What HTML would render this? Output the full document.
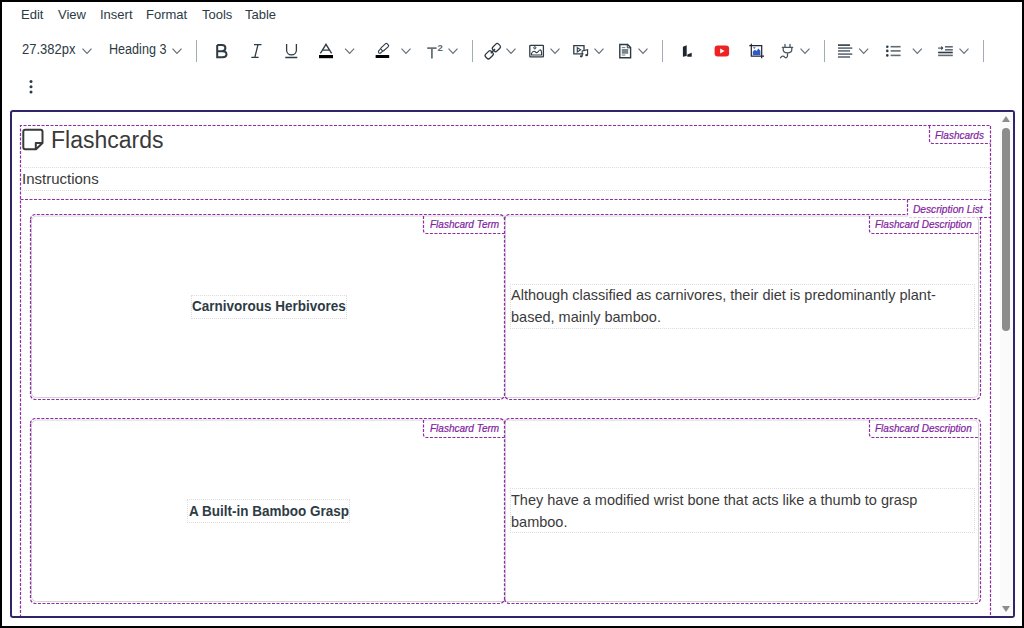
<!DOCTYPE html>
<html><head><meta charset="utf-8">
<style>
html,body{margin:0;padding:0;width:1024px;height:628px;overflow:hidden;background:#fff;}
body{position:relative;font-family:"Liberation Sans",sans-serif;color:#2d3b45;}
.a{position:absolute;white-space:nowrap;line-height:1;}
#frame{position:absolute;left:0;top:0;width:1024px;height:628px;box-sizing:border-box;border:2px solid #000;z-index:50;pointer-events:none;}
.menu{font-size:13px;top:8px;color:#2d3b45;}
.sep{position:absolute;top:40px;width:1px;height:22px;background:#c2c8cc;}
.chev{position:absolute;top:48px;width:10px;height:6px;}
#editor{position:absolute;left:10px;top:110px;width:1005px;height:508px;box-sizing:border-box;border:2px solid #30256a;border-radius:3px;overflow:hidden;background:#fff;}
.ct{color:#3a3a3a;}
.dot{position:absolute;border:1px dotted #dcdcdc;box-sizing:border-box;}
.lbl{position:absolute;font-style:italic;font-size:10px;line-height:1;color:#7f22a0;-webkit-text-stroke:0.2px #7f22a0;white-space:nowrap;}
.col{position:absolute;box-sizing:border-box;border-radius:6px;}
.colin{position:absolute;left:1px;top:1px;right:1px;bottom:1px;border:1px solid #e3e3e3;border-radius:5px;}
</style></head><body>
<div id="frame"></div>

<!-- menu -->
<div class="a menu" style="left:21px">Edit</div>
<div class="a menu" style="left:58px">View</div>
<div class="a menu" style="left:100px">Insert</div>
<div class="a menu" style="left:146px">Format</div>
<div class="a menu" style="left:202px">Tools</div>
<div class="a menu" style="left:245px">Table</div>

<!-- toolbar -->
<div class="a" style="left:22px;top:42px;font-size:13px;transform:scaleY(1.06);transform-origin:0 0">27.382px</div>
<div class="a" style="left:109px;top:43px;font-size:12.6px;transform:scaleY(1.1);transform-origin:0 0">Heading 3</div>
<svg style="position:absolute;left:0;top:0" width="1024" height="100" viewBox="0 0 1024 100">
<polyline points="82.5,48.6 87.0,53.3 91.5,48.6" fill="none" stroke="#66717a" stroke-width="1.2"/><polyline points="172.5,48.6 177.0,53.3 181.5,48.6" fill="none" stroke="#66717a" stroke-width="1.2"/><polyline points="345.1,48.6 349.6,53.3 354.1,48.6" fill="none" stroke="#66717a" stroke-width="1.2"/><polyline points="401.5,48.6 406.0,53.3 410.5,48.6" fill="none" stroke="#66717a" stroke-width="1.2"/><polyline points="448.5,48.6 453.0,53.3 457.5,48.6" fill="none" stroke="#66717a" stroke-width="1.2"/><polyline points="506.5,48.6 511.0,53.3 515.5,48.6" fill="none" stroke="#66717a" stroke-width="1.2"/><polyline points="550.5,48.6 555.0,53.3 559.5,48.6" fill="none" stroke="#66717a" stroke-width="1.2"/><polyline points="594.5,48.6 599.0,53.3 603.5,48.6" fill="none" stroke="#66717a" stroke-width="1.2"/><polyline points="638.5,48.6 643.0,53.3 647.5,48.6" fill="none" stroke="#66717a" stroke-width="1.2"/><polyline points="800.5,48.6 805.0,53.3 809.5,48.6" fill="none" stroke="#66717a" stroke-width="1.2"/><polyline points="859.2,48.6 863.7,53.3 868.2,48.6" fill="none" stroke="#66717a" stroke-width="1.2"/><polyline points="912.8,48.6 917.3,53.3 921.8,48.6" fill="none" stroke="#66717a" stroke-width="1.2"/><polyline points="959.5,48.6 964.0,53.3 968.5,48.6" fill="none" stroke="#66717a" stroke-width="1.2"/>
<rect x="196" y="40" width="1" height="22" fill="#a4acb3"/><rect x="472" y="40" width="1" height="22" fill="#a4acb3"/><rect x="662" y="40" width="1" height="22" fill="#a4acb3"/><rect x="824" y="40" width="1" height="22" fill="#a4acb3"/><rect x="983" y="40" width="1" height="22" fill="#a4acb3"/>
<!-- B -->
<path fill="none" stroke="#2d3b45" stroke-width="2" stroke-linejoin="miter" d="M217.2,45.1 H222 C224.4,45.1 225.4,46.5 225.4,48.1 C225.4,49.8 224.2,51.2 222,51.2 H217.2 M217.2,51.2 H222.6 C225.3,51.2 226.5,52.7 226.5,54.5 C226.5,56.3 225.2,57.2 222.6,57.2 H217.2 V45.1"/>
<!-- I -->
<path fill="none" stroke="#2d3b45" stroke-width="1.3" d="M254,44.7 H261.5 M251.3,57.4 H258.6 M258,44.7 L254.8,57.4"/>
<!-- U -->
<path fill="none" stroke="#2d3b45" stroke-width="1.3" d="M286.6,44 V50.3 a4.9,4.6 0 0 0 9.8,0 V44 M285.3,57.5 H297.3"/>
<!-- A -->
<path fill="none" stroke="#2d3b45" stroke-width="1.3" d="M320.4,53.4 L326,44.3 L331.6,53.4 M322.4,50.2 H329.6"/>
<rect x="319" y="55" width="14" height="3.2" fill="#000"/>
<!-- highlighter -->
<rect x="375.6" y="54.9" width="13.6" height="3.2" rx="0.5" fill="#000"/>
<g transform="translate(384,47.8) rotate(-42)" fill="none" stroke="#2d3b45" stroke-width="1.1" stroke-linejoin="round">
<rect x="-3.2" y="-2" width="8.2" height="4" rx="1"/>
<path d="M-3.2,-1.6 L-6.6,-1.1 L-7.4,0.6 L-6.4,1.6 L-3.2,1.6"/>
</g>
<!-- T2 -->
<path fill="none" stroke="#66717a" stroke-width="1.8" d="M427.2,48.1 H436.6 M431.9,48.1 V58.4"/>
<text x="437.4" y="51" font-family="Liberation Sans" font-weight="bold" font-size="9.5" fill="#5a666e">2</text>
<!-- link -->
<g fill="none" stroke="#2d3b45" stroke-width="1.3">
<rect x="-2.9" y="-4" width="5.8" height="8" rx="2" transform="translate(496.4,47.6) rotate(45)"/>
<rect x="-2.9" y="-4" width="5.8" height="8" rx="2" transform="translate(489.2,54.8) rotate(45)"/>
<path d="M490.8,53.3 L495,49" stroke-width="1.5"/>
</g>
<!-- image -->
<g fill="none" stroke="#2d3b45" stroke-width="1.3">
<rect x="529.8" y="45.3" width="13.6" height="11.6" rx="0.6"/>
<path d="M531.5,55 L531.5,53.5 C533,50.5 534.5,51 536,52.5 C538,53.5 539,49.5 540.3,49.7 C541,50 541.6,51 541.6,53 V55 Z" stroke-width="1.1"/>
<circle cx="534.8" cy="47.8" r="1.1" stroke-width="1"/>
</g>
<!-- media -->
<g fill="none" stroke="#2d3b45" stroke-width="1.3">
<path d="M583.5,53.9 H573.8 V45.6 H584 V50"/>
<path d="M577.3,47.6 L580.6,49.8 L577.3,52 Z" stroke-width="1.1"/>
<path d="M582.2,56.2 V51 L587.6,49.6 V55" stroke-width="1.1"/>
</g>
<g fill="#2d3b45"><ellipse cx="581.2" cy="56.3" rx="1.4" ry="1.1"/><ellipse cx="586.6" cy="55.2" rx="1.4" ry="1.1"/></g>
<!-- doc -->
<g fill="none" stroke="#2d3b45" stroke-width="1.4">
<path d="M619.8,44.5 H627.6 L630.6,47.5 V57.7 H619.8 Z"/>
<path d="M627.3,44.8 V47.8 H630.4" stroke-width="1"/>
</g>
<g fill="#7b858c"><rect x="621.8" y="47" width="3.5" height="1.1"/><rect x="621.8" y="49" width="6.4" height="4.8"/><rect x="621.8" y="54.5" width="3.5" height="1.1"/></g>
<!-- LTI -->
<path fill="#1e2430" d="M682.9,46.8 L686.7,45.2 V56 L682.9,56.8 Z M687.3,54.5 L691.7,52.8 V56.7 H687.3 Z"/>
<!-- youtube -->
<rect x="714.6" y="45.5" width="14.5" height="10.9" rx="3" fill="#ee2222"/>
<path fill="#fff" d="M720.2,48.4 L724.6,51 L720.2,53.6 Z"/>
<!-- crop -->
<g fill="none" stroke="#1e2430" stroke-width="1.2">
<path d="M751.3,43.8 V56.1 H764 M749.3,45.7 H761.7 V58.3"/>
</g>
<path fill="#2e5bc4" d="M752.8,55 V51.5 L755,49.8 L756.6,51 L758.3,48.5 L760.4,50.8 V55 Z M753,47.3 h2.6 l-1.3,1.8 z"/>
<!-- plug -->
<g fill="none" stroke="#4a565e" stroke-width="1.3" stroke-linecap="round">
<path d="M785,44.4 V47.2 M790,44.4 V47.2 M782.3,47.3 H792.7 M783.2,47.3 V49.5 C783.2,51.8 785,52.8 787.5,52.8 C790,52.8 791.8,51.8 791.8,49.5 V47.3 M787.5,52.8 V55.5 C787.5,57.6 786,58.3 784.8,57.2 C783.6,55.8 782,55.3 780.5,57.8"/>
</g>
<!-- align -->
<g fill="#2d3b45">
<rect x="838" y="44.3" width="12" height="1.6"/>
<rect x="838" y="47.3" width="14.3" height="1.6" fill="#606c75"/>
<rect x="838" y="50.1" width="12" height="1.6" fill="#606c75"/>
<rect x="838" y="53.3" width="14.3" height="1.6" fill="#606c75"/>
<rect x="838" y="56.2" width="12" height="1.6" fill="#606c75"/>
</g>
<!-- list -->
<g fill="#2d3b45">
<circle cx="887.3" cy="46.7" r="1.3"/><circle cx="887.3" cy="50.9" r="1.3"/><circle cx="887.3" cy="55.4" r="1.3"/>
<rect x="890.6" y="45.9" width="10" height="1.6" fill="#606c75"/>
<rect x="890.6" y="50.1" width="10" height="1.6" fill="#606c75"/>
<rect x="890.6" y="54.6" width="10" height="1.6" fill="#606c75"/>
</g>
<!-- indent -->
<g fill="#606c75">
<rect x="938.1" y="47.4" width="4" height="1.4"/>
<path d="M941.3,45.8 L943.4,48.1 L941.3,50.4 Z" fill="#2d3b45"/>
<rect x="945" y="46" width="7.8" height="1.6"/>
<rect x="945" y="49" width="7.8" height="1.6"/>
<rect x="938.1" y="51.7" width="14.7" height="1.6" fill="#2d3b45"/>
<rect x="938.1" y="54.6" width="14.7" height="1.6"/>
</g>
<!-- more dots -->
<g fill="#2d3b45"><circle cx="31" cy="81.5" r="1.5"/><circle cx="31" cy="86.7" r="1.5"/><circle cx="31" cy="91.9" r="1.5"/></g>
</svg>

<!-- editor -->
<div id="editor"></div>
<div id="clip" style="position:absolute;left:12px;top:112px;width:1001px;height:504px;overflow:hidden;">
<div style="position:absolute;left:-12px;top:-112px;width:1024px;height:628px;">
<svg style="position:absolute;left:0;top:0" width="1024" height="628" viewBox="0 0 1024 628">
<path d="M31.5,221.0 A5,5 0 0 1 36.5,216.0 H973.5 A5,5 0 0 1 978.5,221.0 V392.5 A5,5 0 0 1 973.5,397.5 H36.5 A5,5 0 0 1 31.5,392.5 Z" stroke="#d4d4d4" stroke-width="1" fill="none"/>
<path d="M505.5,216.0 V397.5" stroke="#d4d4d4" stroke-width="1" fill="none"/>
<path d="M31.5,425.0 A5,5 0 0 1 36.5,420.0 H973.5 A5,5 0 0 1 978.5,425.0 V596.5 A5,5 0 0 1 973.5,601.5 H36.5 A5,5 0 0 1 31.5,596.5 Z" stroke="#d4d4d4" stroke-width="1" fill="none"/>
<path d="M505.5,420.0 V601.5" stroke="#d4d4d4" stroke-width="1" fill="none"/>
<rect x="908" y="200" width="82" height="17" fill="#fff"/>
<path d="M20.5,640 V125.5 H990.5 V640" stroke="#8e2ca5" stroke-width="1.2" stroke-dasharray="3 1.5" fill="none"/>
<path d="M929.5,125.5 V140.5 A3,3 0 0 0 932.5,143.5 H990.5" stroke="#8e2ca5" stroke-width="1.2" stroke-dasharray="3 1.5" fill="none"/>
<path d="M20.5,199.5 H990.5" stroke="#8e2ca5" stroke-width="1.2" stroke-dasharray="3 1.5" fill="none"/>
<path d="M907.5,199.5 V214.5 A3,3 0 0 0 910.5,217.5 H978.5" stroke="#dcc3e6" stroke-width="1" stroke-dasharray="3 1.5" fill="none"/>
<path d="M907.5,199.5 V214.5" stroke="#8e2ca5" stroke-width="1.2" stroke-dasharray="3 1.5" fill="none"/>
<path d="M979.5,217.5 H990.5" stroke="#8e2ca5" stroke-width="1.2" stroke-dasharray="3 1.5" fill="none"/>
<path d="M30.5,219.5 A5,5 0 0 1 35.5,214.5 H499.5 A5,5 0 0 1 504.5,219.5 V394.5 A5,5 0 0 1 499.5,399.5 H35.5 A5,5 0 0 1 30.5,394.5 Z" stroke="#8e2ca5" stroke-width="1.2" stroke-dasharray="3 1.5" fill="none"/>
<path d="M504.5,219.5 A5,5 0 0 1 509.5,214.5 H907.5" stroke="#8e2ca5" stroke-width="1.2" stroke-dasharray="3 1.5" fill="none"/>
<path d="M980.5,217.5 V394.5 A5,5 0 0 1 975.5,399.5 H509.5 A5,5 0 0 1 504.5,394.5" stroke="#8e2ca5" stroke-width="1.2" stroke-dasharray="3 1.5" fill="none"/>
<path d="M423.5,216.0 V230.5 A3,3 0 0 0 426.5,233.5 H504.5" stroke="#8e2ca5" stroke-width="1.2" stroke-dasharray="3 1.5" fill="none"/>
<path d="M869.5,216.0 V230.5 A3,3 0 0 0 872.5,233.5 H978.5" stroke="#8e2ca5" stroke-width="1.2" stroke-dasharray="3 1.5" fill="none"/>
<path d="M30.5,423.5 A5,5 0 0 1 35.5,418.5 H499.5 A5,5 0 0 1 504.5,423.5 V598.5 A5,5 0 0 1 499.5,603.5 H35.5 A5,5 0 0 1 30.5,598.5 Z" stroke="#8e2ca5" stroke-width="1.2" stroke-dasharray="3 1.5" fill="none"/>
<path d="M504.5,423.5 A5,5 0 0 1 509.5,418.5 H975.5 A5,5 0 0 1 980.5,423.5 V598.5 A5,5 0 0 1 975.5,603.5 H509.5 A5,5 0 0 1 504.5,598.5" stroke="#8e2ca5" stroke-width="1.2" stroke-dasharray="3 1.5" fill="none"/>
<path d="M423.5,420.0 V434.5 A3,3 0 0 0 426.5,437.5 H504.5" stroke="#8e2ca5" stroke-width="1.2" stroke-dasharray="3 1.5" fill="none"/>
<path d="M869.5,420.0 V434.5 A3,3 0 0 0 872.5,437.5 H978.5" stroke="#8e2ca5" stroke-width="1.2" stroke-dasharray="3 1.5" fill="none"/>
<!-- sticky note icon -->
<path d="M23.3,131.8 Q23.3,129.8 25.3,129.8 H40.5 Q42.5,129.8 42.5,131.8 V143 L36,149.2 H25.3 Q23.3,149.2 23.3,147.2 Z M42.3,143 H35.8 V149.4" fill="none" stroke="#3a3a3a" stroke-width="2" stroke-linejoin="round"/>
</svg>
<div class="dot" style="left:20px;top:167px;width:971px;height:24px;border-left:none;border-right:none"></div>
<div class="dot" style="left:191px;top:295px;width:156px;height:24px"></div>
<div class="dot" style="left:510px;top:284px;width:465px;height:45px"></div>
<div class="dot" style="left:187px;top:499px;width:163px;height:24px"></div>
<div class="dot" style="left:510px;top:488px;width:465px;height:45px"></div>

<div class="a ct" style="left:51px;top:127px;font-size:23px;transform:scaleY(1.08);transform-origin:0 0;color:#3a3a3a">Flashcards</div>
<div class="a ct" style="left:22px;top:171px;font-size:15px">Instructions</div>
<div class="a ct" style="left:192px;top:299px;font-size:13.5px;font-weight:bold;transform:scaleY(1.07);transform-origin:0 0;color:#2d3b45">Carnivorous Herbivores</div>
<div class="a ct" style="left:189px;top:504px;font-size:13.5px;font-weight:bold;transform:scaleY(1.07);transform-origin:0 0;color:#2d3b45">A Built-in Bamboo Grasp</div>
<div class="a ct" style="left:511px;top:285px;font-size:14.5px;line-height:21.6px">Although classified as carnivores, their diet is predominantly plant-<br>based, mainly bamboo.</div>
<div class="a ct" style="left:511px;top:490px;font-size:14.5px;line-height:21.6px">They have a modified wrist bone that acts like a thumb to grasp<br>bamboo.</div>

<div class="lbl" style="left:935px;top:131px">Flashcards</div>
<div class="lbl" style="left:913px;top:205px;font-size:10.2px">Description List</div>
<div class="lbl" style="left:430px;top:220px">Flashcard Term</div>
<div class="lbl" style="left:875px;top:220px">Flashcard Description</div>
<div class="lbl" style="left:430px;top:424px">Flashcard Term</div>
<div class="lbl" style="left:875px;top:424px">Flashcard Description</div>
</div>
<!-- scrollbar -->
<div style="position:absolute;left:988px;top:0;width:13px;height:504px;background:#fafafa"></div>
<svg style="position:absolute;left:988px;top:0" width="13" height="504" viewBox="0 0 13 504">
<path d="M2,10 L6,4 L10,10 Z" fill="#8c8c8c"/>
<rect x="2" y="16" width="8" height="203" rx="4" fill="#8c8c8c"/>
<path d="M2,494 L6,500 L10,494 Z" fill="#8c8c8c"/>
</svg>
</div>
</body></html>
